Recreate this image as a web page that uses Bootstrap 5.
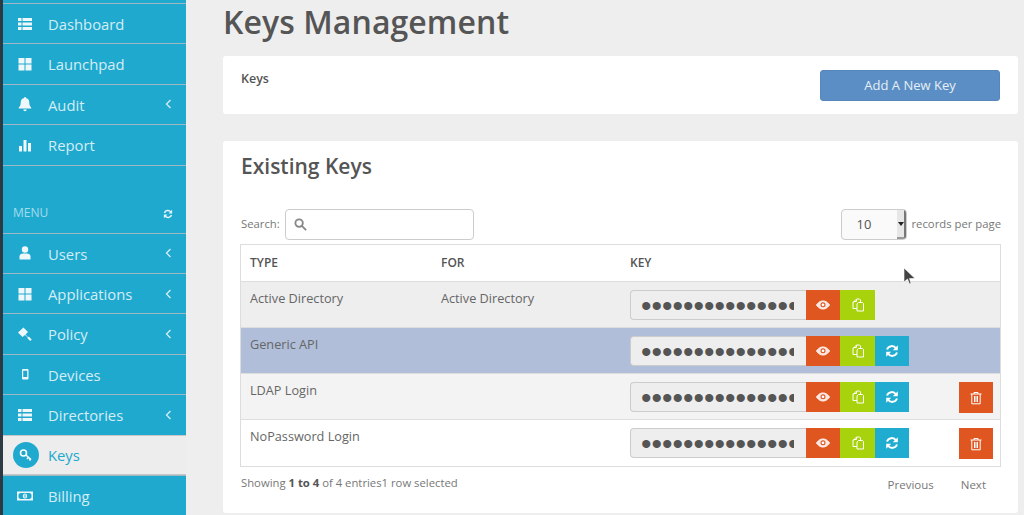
<!DOCTYPE html>
<html lang="en">
<head>
<meta charset="utf-8">
<title>Keys Management</title>
<link href="https://cdn.jsdelivr.net/npm/bootstrap@5.3.0/dist/css/bootstrap.min.css" rel="stylesheet">
<style>
html,body{height:515px;overflow:hidden}
body{font-family:"Open Sans",sans-serif;background:#eee;color:#555;font-size:13px}
.shell{height:515px;position:relative;overflow:hidden}
.sidebar{width:186px;flex:none;background:#20a9cf;border-left:3px solid #2c3a44;padding-top:3px}
.side-item{height:40.4px;border-top:1px solid #9fb9c4;color:#d4edf5;font-size:14.8px;padding-left:14px;padding-right:14px}
.side-item svg.ic{width:16px;height:16px;fill:#eef8fb;flex:none}
.side-item .lbl{margin-left:15px;flex-grow:1;position:relative;top:.5px}
.side-item .chev{width:7px;height:10px;fill:none;stroke:#d4edf5;stroke-width:1.3}
.side-item.on{background:#ededed;color:#20a9cf;padding-left:10px;border-top-color:#c6c6c6;border-bottom:1px solid #c6c6c6;height:40.4px}
.side-item.on .lbl{margin-left:9px}
.key-dot{width:26px;height:26px;border-radius:50%;background:#20a9cf;flex:none}
.key-dot svg{width:16px;height:16px;fill:none;stroke:#fff;stroke-width:1.6}
.menu-head{height:68px;padding:0 13px 11px 10px;color:#a4dcec;font-size:12px}
.menu-head svg{width:10px;height:10px;fill:none;stroke:#e4f5fa;stroke-width:1.3;margin-bottom:3px}
.content{padding-left:37px;padding-right:6px;flex-grow:1;min-width:0}
.page-title{font-size:32px;font-weight:600;color:#555;letter-spacing:.08px;line-height:44px;margin:0 0 12px}
.panel{background:#fff;border-radius:3px}
.panel-keys{height:58px;padding:14px 18px 0;margin-bottom:27px}
.panel-keys .tt{font-size:12.5px;font-weight:600;line-height:16px;padding-top:1px}
.add-btn{width:180px;height:31px;background:#5b8ec4;color:#e6eef6;border:1px solid #5587bd;border-radius:3px;font-size:13px;padding:0}
.panel-list{padding:0 17px 0 18px;height:372px}
.sub-title{font-size:21px;font-weight:600;color:#555;line-height:28px;margin:0;padding-top:11px;height:68px}
.filter-bar{height:35px;color:#777;font-size:11.3px;margin-top:0}
.filter-bar>div{height:31px}
.search-box{width:189px;height:31px;border:1px solid #ccc;border-radius:4px;margin-left:5px;padding-left:8px}
.search-box svg{width:13px;height:13px;fill:none;stroke:#888;stroke-width:2}
.len-box{width:66px;height:31px;border:1px solid #ccc;border-radius:4px;background:#fafafa;color:#555;font-size:13px;padding-left:15px;margin-right:5px;overflow:hidden}
.len-arrow{width:9px;height:100%;background:#e7e7e7;border-right:2px solid #777;border-bottom:2px solid #999}
.len-arrow i{display:block;border:3px solid transparent;border-top:4px solid #222;border-bottom:0;margin-left:1px}
.keys-table{width:761px;margin-left:-1px;table-layout:fixed;border:1px solid #ddd;border-collapse:separate;border-spacing:0;color:#666;font-size:12.7px}
.keys-table th{height:37px;padding:0 9px;font-size:12px;font-weight:600;color:#555;border-bottom:1px solid #ddd;background:#fff}
.keys-table td{height:46px;padding:8px 9px 6px;vertical-align:top;border-bottom:1px solid #ddd;line-height:16px}
.keys-table tr:last-child td{border-bottom:0}
.r-active td{background:#eee}
.r-sel td{background:#b0bed9}
.r-alt td{background:#f3f3f3}
.r-plain td{background:#fff}
.secret{width:176px;height:30px;background:#eee;border:1px solid #ccc;border-right:0;border-radius:4px 0 0 4px;color:#555;font-size:30px;padding:2px 12px 0 10px;font-family:"Liberation Sans",sans-serif;letter-spacing:0;outline:none}
.act{height:30px;width:34px;border:0;padding:0;border-radius:0;flex:none}
.act svg{width:14px;height:14px;display:block;margin:auto;fill:none;stroke:#fff;stroke-width:1}
.a-o{background:#df5621}.a-g{background:#a8d20c;width:35px}.a-b{background:#20abd0}
.a-t{background:#df5621;height:31px;margin-left:50px}
.foot-bar{color:#777;font-size:11.3px;padding-top:8px;padding-right:1px}
.foot-bar b{color:#555;font-weight:700}
.pager{color:#777;font-size:11.5px;margin-top:1px;margin-right:14px;gap:27px}
.cursor{position:absolute;left:903px;top:267px;width:13px;height:20px}
</style>
</head>
<body>
<svg width="0" height="0" class="position-absolute">
<defs>
<symbol id="i-list" viewBox="0 0 16 16"><path d="M1 2h3.500v3H1zM5.500 2H15v3H5.500zM1 6.500h3.500v3H1zM5.500 6.500H15v3H5.500zM1 11h3.500v3H1zM5.500 11H15v3H5.500z"/></symbol>
<symbol id="i-grid" viewBox="0 0 16 16"><path d="M1.500 2H7.500v5.500H1.500zM8.500 2h6v5.500h-6zM1.500 8.500H7.500V14.500H1.500zM8.500 8.500h6v6h-6z"/></symbol>
<symbol id="i-bell" viewBox="0 0 16 16"><path d="M8 1a1 1 0 0 1 1 1c2.500.5 3.300 2.500 3.300 5 0 2.500 1 3.500 1.900 4.500v1H1.800v-1c.9-1 1.900-2 1.900-4.500 0-2.500.8-4.500 3.300-5a1 1 0 0 1 1-1zM6.300 13.500h3.400a1.700 1.700 0 0 1-3.400 0z"/></symbol>
<symbol id="i-bars" viewBox="0 0 16 16"><path d="M2 9h3v5.500H2zM6.500 3h3v11.500h-3zM11 6h3v8.500h-3z"/></symbol>
<symbol id="i-user" viewBox="0 0 16 16"><circle cx="8" cy="4.500" r="3.200"/><path d="M2.500 14.500v-3c0-2 1.800-3 3.500-3h4c1.700 0 3.500 1 3.500 3v3z"/></symbol>
<symbol id="i-gavel" viewBox="0 0 16 16"><path d="M6.500 1.500 11 6 8.500 8.500 11 11l1-.2 2.700 2.700-1.500 1.500L10.500 12.300l.1-1L8 8.900 5.500 11 1 6.500z"/></symbol>
<symbol id="i-phone" viewBox="0 0 16 16"><path fill-rule="evenodd" d="M6 3h4.500a1 1 0 0 1 1 1v8.500a1 1 0 0 1-1 1H6a1 1 0 0 1-1-1V4a1 1 0 0 1 1-1zm.2 1.800v6.200h4V4.800z"/></symbol>
<symbol id="i-money" viewBox="0 0 16 16"><path fill-rule="evenodd" d="M0 3.500h16v9H0zM3 5 1.500 6.500v3L3 11h10l1.500-1.500v-3L13 5zM8 5.500a2.200 2.500 0 1 1 0 5 2.200 2.500 0 0 1 0-5zM7.500 6.500v3h1v-3z"/></symbol>
<symbol id="i-eye" viewBox="0 0 14 14"><path fill="#fff" fill-opacity=".85" d="M.5 7C3 3.600 5 3 7 3s4 .6 6.500 4C11 10.400 9 11 7 11S3 10.400.5 7z"/><circle cx="7" cy="6.800" r="2.500" fill="#df5621" stroke="none"/><circle cx="7" cy="6.800" r="1.400" fill="#fff" stroke="none"/></symbol>
<symbol id="i-copy" viewBox="0 0 14 14"><path d="M5.500 1H8.500L9.500 2V4.500M5.500 1 3 3.500V4H2V10.500H6"/><path d="M7.500 4.500H11.500L12.500 5.500V13H6V6z"/><path d="M3 3.500H5.500V1"/></symbol>
<symbol id="i-sync" viewBox="0 0 14 14"><path fill="none" stroke-width="2" d="M2 5.500A5 5 0 0 1 11 4.500M12 8.500A5 5 0 0 1 3 9.500"/><path fill="currentColor" stroke="none" d="M12.800 1.200v5H7.800zM1.200 12.800v-5H6.200z"/></symbol>
<symbol id="i-trash" viewBox="0 0 14 14"><path d="M1.500 3h11M5 3V1.500h4V3M2.800 3v9.800h8.400V3M5.500 5v6M7 5v6M8.500 5v6"/></symbol>
</defs>
</svg>
<div class="shell d-flex">
  <nav class="sidebar">
    <div class="side-item d-flex align-items-center"><svg class="ic"><use href="#i-list"/></svg><span class="lbl">Dashboard</span></div>
    <div class="side-item d-flex align-items-center"><svg class="ic"><use href="#i-grid"/></svg><span class="lbl">Launchpad</span></div>
    <div class="side-item d-flex align-items-center"><svg class="ic"><use href="#i-bell"/></svg><span class="lbl">Audit</span><svg class="chev" viewBox="0 0 7 10"><path d="M5.500 1 1.500 5l4 4"/></svg></div>
    <div class="side-item d-flex align-items-center"><svg class="ic"><use href="#i-bars"/></svg><span class="lbl">Report</span></div>
    <div class="side-item menu-head d-flex align-items-end justify-content-between"><span>MENU</span><svg viewBox="0 0 14 14" style="color:#e4f5fa"><use href="#i-sync"/></svg></div>
    <div class="side-item d-flex align-items-center"><svg class="ic"><use href="#i-user"/></svg><span class="lbl">Users</span><svg class="chev" viewBox="0 0 7 10"><path d="M5.500 1 1.500 5l4 4"/></svg></div>
    <div class="side-item d-flex align-items-center"><svg class="ic"><use href="#i-grid"/></svg><span class="lbl">Applications</span><svg class="chev" viewBox="0 0 7 10"><path d="M5.500 1 1.500 5l4 4"/></svg></div>
    <div class="side-item d-flex align-items-center"><svg class="ic"><use href="#i-gavel"/></svg><span class="lbl">Policy</span><svg class="chev" viewBox="0 0 7 10"><path d="M5.500 1 1.500 5l4 4"/></svg></div>
    <div class="side-item d-flex align-items-center"><svg class="ic"><use href="#i-phone"/></svg><span class="lbl">Devices</span></div>
    <div class="side-item d-flex align-items-center"><svg class="ic"><use href="#i-list"/></svg><span class="lbl">Directories</span><svg class="chev" viewBox="0 0 7 10"><path d="M5.500 1 1.500 5l4 4"/></svg></div>
    <div class="side-item on d-flex align-items-center"><span class="key-dot d-flex align-items-center justify-content-center"><svg viewBox="0 0 16 16"><circle cx="5.500" cy="6" r="3"/><path d="M7.800 8 13 12.500M10.500 10.300 9 12M12.500 12 11.500 13.500"/></svg></span><span class="lbl">Keys</span></div>
    <div class="side-item d-flex align-items-center"><svg class="ic"><use href="#i-money"/></svg><span class="lbl">Billing</span></div>
  </nav>
  <main class="content">
    <h1 class="page-title">Keys Management</h1>
    <section class="panel panel-keys d-flex justify-content-between align-items-start">
      <div class="tt">Keys</div>
      <button type="button" class="btn add-btn">Add A New Key</button>
    </section>
    <section class="panel panel-list">
      <h2 class="sub-title">Existing Keys</h2>
      <div class="filter-bar d-flex justify-content-between align-items-start">
        <div class="d-flex align-items-center">Search:<div class="search-box d-flex align-items-center"><svg viewBox="0 0 14 14"><circle cx="5.500" cy="5.500" r="4"/><path d="M8.500 8.500 13 13"/></svg></div></div>
        <div class="d-flex align-items-center"><div class="len-box d-flex justify-content-between align-items-center"><span>10</span><span class="len-arrow d-flex align-items-center"><i></i></span></div>records per page</div>
      </div>
      <table class="keys-table">
        <colgroup><col style="width:191px"><col style="width:189px"><col></colgroup>
        <thead><tr><th>TYPE</th><th>FOR</th><th>KEY</th></tr></thead>
        <tbody>
          <tr class="r-active"><td>Active Directory</td><td>Active Directory</td><td><div class="d-flex"><input class="secret" type="password" readonly value="keysecretvaluehiddenhere" aria-label="Key"><button class="act a-o" type="button"><svg><use href="#i-eye"/></svg></button><button class="act a-g" type="button"><svg><use href="#i-copy"/></svg></button></div></td></tr>
          <tr class="r-sel"><td>Generic API</td><td></td><td><div class="d-flex"><input class="secret" type="password" readonly value="keysecretvaluehiddenhere" aria-label="Key"><button class="act a-o" type="button"><svg><use href="#i-eye"/></svg></button><button class="act a-g" type="button"><svg><use href="#i-copy"/></svg></button><button class="act a-b" type="button" style="color:#fff"><svg><use href="#i-sync"/></svg></button></div></td></tr>
          <tr class="r-alt"><td>LDAP Login</td><td></td><td><div class="d-flex"><input class="secret" type="password" readonly value="keysecretvaluehiddenhere" aria-label="Key"><button class="act a-o" type="button"><svg><use href="#i-eye"/></svg></button><button class="act a-g" type="button"><svg><use href="#i-copy"/></svg></button><button class="act a-b" type="button" style="color:#fff"><svg><use href="#i-sync"/></svg></button><button class="act a-t" type="button"><svg><use href="#i-trash"/></svg></button></div></td></tr>
          <tr class="r-plain"><td>NoPassword Login</td><td></td><td><div class="d-flex"><input class="secret" type="password" readonly value="keysecretvaluehiddenhere" aria-label="Key"><button class="act a-o" type="button"><svg><use href="#i-eye"/></svg></button><button class="act a-g" type="button"><svg><use href="#i-copy"/></svg></button><button class="act a-b" type="button" style="color:#fff"><svg><use href="#i-sync"/></svg></button><button class="act a-t" type="button"><svg><use href="#i-trash"/></svg></button></div></td></tr>
        </tbody>
      </table>
      <div class="foot-bar d-flex justify-content-between align-items-start">
        <div>Showing <b>1 to 4</b> of 4 entries1 row selected</div>
        <div class="pager d-flex"><span>Previous</span><span>Next</span></div>
      </div>
    </section>
  </main>
  <svg class="cursor" viewBox="0 0 13 20"><path d="M1 1v14l3.500-3 2 5 1.500-.5-1.500-5H12z" fill="#444" stroke="#fff" stroke-width=".6"/></svg>
</div>
<script src="https://cdn.jsdelivr.net/npm/bootstrap@5.3.0/dist/js/bootstrap.bundle.min.js"></script>
</body>
</html>
